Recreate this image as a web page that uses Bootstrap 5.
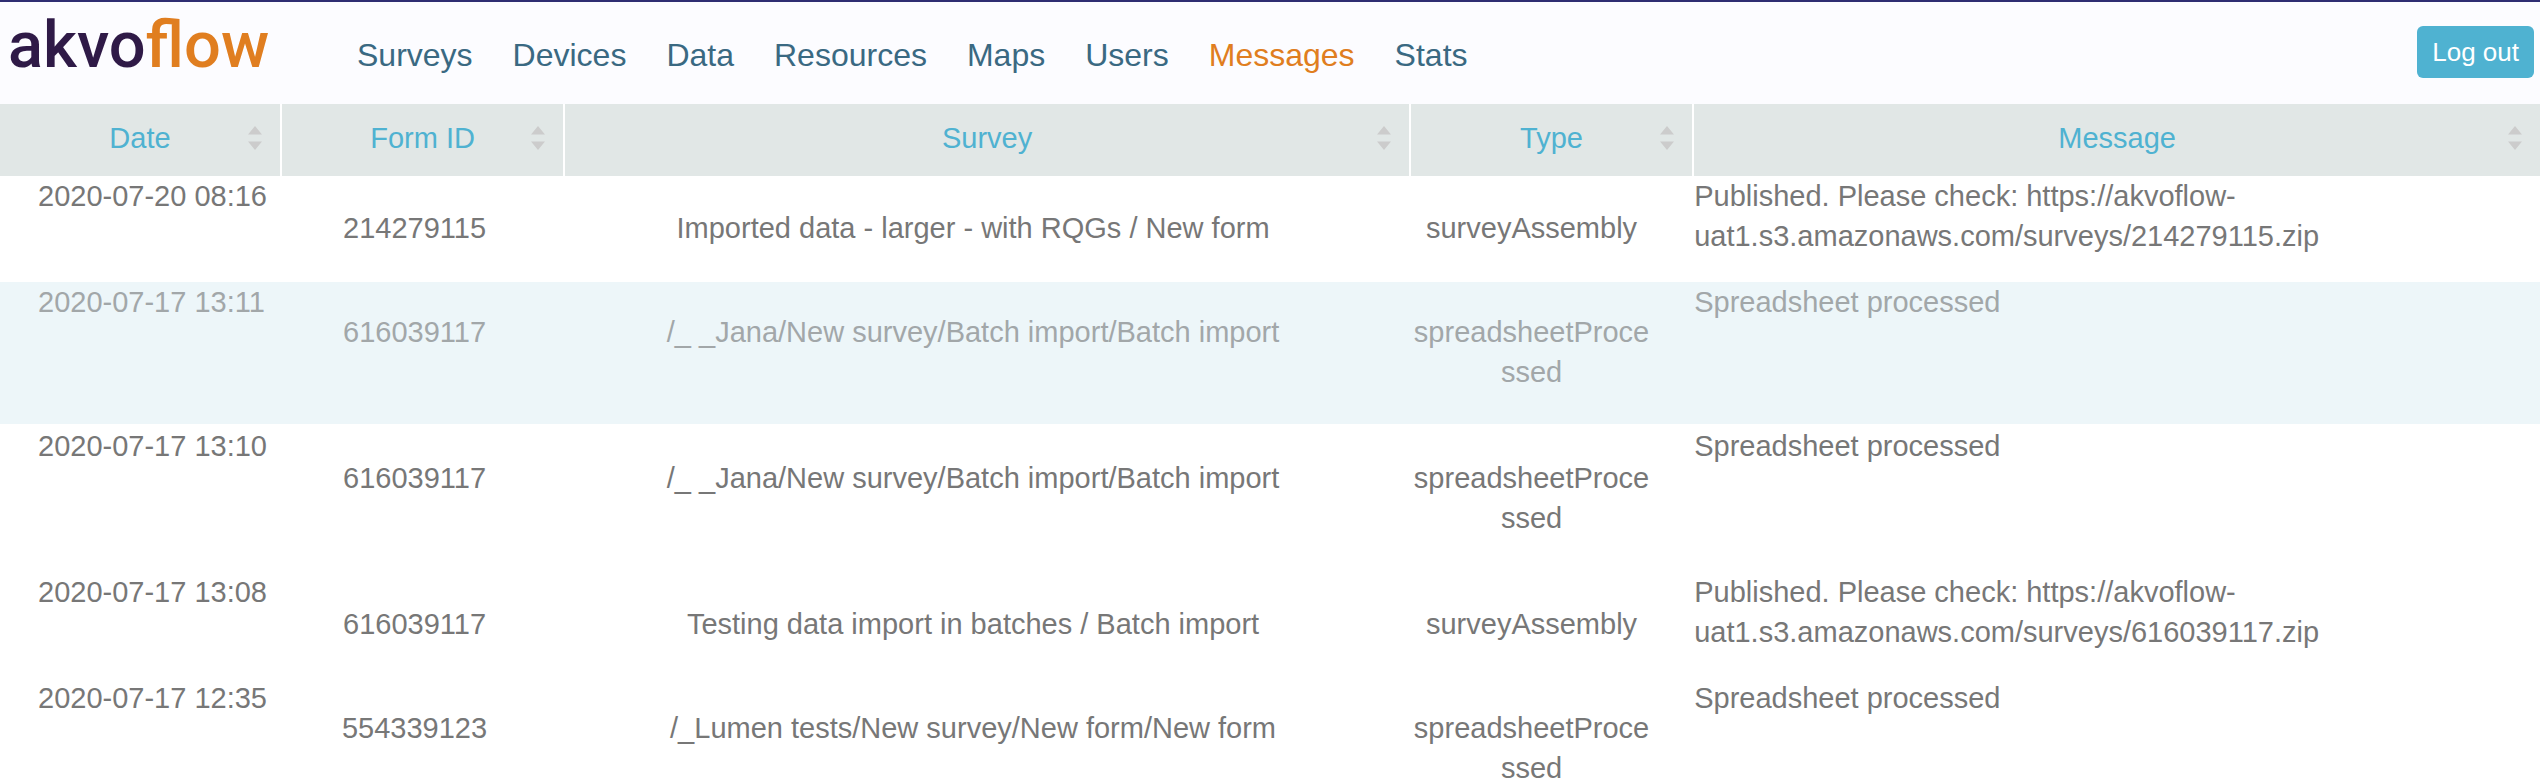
<!DOCTYPE html>
<html lang="en">
<head>
<meta charset="utf-8">
<meta name="viewport" content="width=device-width, initial-scale=1">
<title>Akvo Flow – Messages</title>
<link href="https://cdn.jsdelivr.net/npm/bootstrap@5.3.0/dist/css/bootstrap.min.css" rel="stylesheet">
<style>
  body { font-family: "Liberation Sans", Arial, sans-serif; font-size: 29px; line-height: 40px; color: #777; background: #fff; overflow-x: hidden; }
  .site-header { background: #fcfcff; border-top: 2px solid #2e2d72; min-height: 104px; }
  .logo { font-family: Roboto, sans-serif; font-weight: 500; font-size: 65px; line-height: 76px; color: #2f1a47; text-decoration: none; padding-top: 5px; margin-left: 8px; width: 349px; }
  .logo span { color: #e07e20; }
  .main-nav { gap: 40px; padding-top: 33px; font-size: 32px; }
  .main-nav .nav-link { padding: 0; color: #3a6982; }
  .main-nav .nav-link.active { color: #e07e20; }
  .btn-logout, .btn-logout:hover { background: #4fb2d1; color: #fff; border: 0; border-radius: 6px; font-size: 26px; line-height: 36px; padding: 8px 15px; margin: 24px 6px 0 0; }
  .msg-table { table-layout: fixed; width: 100%; border-collapse: separate; border-spacing: 0; }
  .msg-table th { background: #e1e7e6; border-right: 2px solid #fff; padding: 0; font-weight: 400; }
  .msg-table th:last-child { border-right: 0; }
  .sort-btn { background: none; border: 0; color: #4fb2d1; padding: 14px 18px 18px; }
  .sort-btn span { padding-left: 14px; }
  .sort-btn svg { width: 14px; height: 24px; fill: #ccc; }
  .col-date { width: 11.1%; }
  .col-ninth { width: 11.15%; }
  .col-third { width: 33.3%; }
  .msg-table td { vertical-align: top; padding: 0; }
  .msg-table td.date { padding-left: 38px; white-space: nowrap; }
  .msg-table td.mid { text-align: center; padding-top: 32px; padding-bottom: 34px; }
  .tight td.mid { padding-top: 30px !important; padding-bottom: 32px !important; }
  .msg-table td.form-id { padding-right: 18px; }
  .msg-table td.survey { padding-right: 30px; }
  .msg-table td.type { padding-right: 42px; word-break: break-all; }
  .unread td { background: #edf6f9; color: #a2a7a9; border-bottom: 2px solid #fff; }
</style>
</head>
<body>
<header class="site-header d-flex align-items-start">
  <a class="logo flex-shrink-0" href="#">akvo<span>flow</span></a>
  <nav class="nav main-nav flex-grow-1" aria-label="Main">
    <a class="nav-link" href="#">Surveys</a>
    <a class="nav-link" href="#">Devices</a>
    <a class="nav-link" href="#">Data</a>
    <a class="nav-link" href="#">Resources</a>
    <a class="nav-link" href="#">Maps</a>
    <a class="nav-link" href="#">Users</a>
    <a class="nav-link active" href="#" aria-current="page">Messages</a>
    <a class="nav-link" href="#">Stats</a>
  </nav>
  <button type="button" class="btn btn-logout flex-shrink-0">Log out</button>
</header>
<main>
  <table class="msg-table">
    <colgroup><col class="col-date"><col class="col-ninth"><col class="col-third"><col class="col-ninth"><col class="col-third"></colgroup>
    <thead>
      <tr>
        <th scope="col"><button type="button" class="sort-btn d-flex w-100 align-items-center"><span class="flex-grow-1 text-center">Date</span><svg viewBox="0 0 14 24" aria-hidden="true"><path d="M7 0l7 8.500H0zM0 15.500h14L7 24z"/></svg></button></th>
        <th scope="col"><button type="button" class="sort-btn d-flex w-100 align-items-center"><span class="flex-grow-1 text-center">Form ID</span><svg viewBox="0 0 14 24" aria-hidden="true"><path d="M7 0l7 8.500H0zM0 15.500h14L7 24z"/></svg></button></th>
        <th scope="col"><button type="button" class="sort-btn d-flex w-100 align-items-center"><span class="flex-grow-1 text-center">Survey</span><svg viewBox="0 0 14 24" aria-hidden="true"><path d="M7 0l7 8.500H0zM0 15.500h14L7 24z"/></svg></button></th>
        <th scope="col"><button type="button" class="sort-btn d-flex w-100 align-items-center"><span class="flex-grow-1 text-center">Type</span><svg viewBox="0 0 14 24" aria-hidden="true"><path d="M7 0l7 8.500H0zM0 15.500h14L7 24z"/></svg></button></th>
        <th scope="col"><button type="button" class="sort-btn d-flex w-100 align-items-center"><span class="flex-grow-1 text-center">Message</span><svg viewBox="0 0 14 24" aria-hidden="true"><path d="M7 0l7 8.500H0zM0 15.500h14L7 24z"/></svg></button></th>
      </tr>
    </thead>
    <tbody>
      <tr>
        <td class="date">2020-07-20 08:16</td>
        <td class="mid form-id">214279115</td>
        <td class="mid survey">Imported data - larger - with RQGs / New form</td>
        <td class="mid type">surveyAssembly</td>
        <td>Published. Please check: https://akvoflow-uat1.s3.amazonaws.com/surveys/214279115.zip</td>
      </tr>
      <tr class="unread tight">
        <td class="date">2020-07-17 13:11</td>
        <td class="mid form-id">616039117</td>
        <td class="mid survey">/_ _Jana/New survey/Batch import/Batch import</td>
        <td class="mid type">spreadsheetProcessed</td>
        <td>Spreadsheet processed</td>
      </tr>
      <tr>
        <td class="date">2020-07-17 13:10</td>
        <td class="mid form-id">616039117</td>
        <td class="mid survey">/_ _Jana/New survey/Batch import/Batch import</td>
        <td class="mid type">spreadsheetProcessed</td>
        <td>Spreadsheet processed</td>
      </tr>
      <tr>
        <td class="date">2020-07-17 13:08</td>
        <td class="mid form-id">616039117</td>
        <td class="mid survey">Testing data import in batches / Batch import</td>
        <td class="mid type">surveyAssembly</td>
        <td>Published. Please check: https://akvoflow-uat1.s3.amazonaws.com/surveys/616039117.zip</td>
      </tr>
      <tr class="tight">
        <td class="date">2020-07-17 12:35</td>
        <td class="mid form-id">554339123</td>
        <td class="mid survey">/_Lumen tests/New survey/New form/New form</td>
        <td class="mid type">spreadsheetProcessed</td>
        <td>Spreadsheet processed</td>
      </tr>
    </tbody>
  </table>
</main>
<script src="https://cdn.jsdelivr.net/npm/bootstrap@5.3.0/dist/js/bootstrap.bundle.min.js"></script>
</body>
</html>
